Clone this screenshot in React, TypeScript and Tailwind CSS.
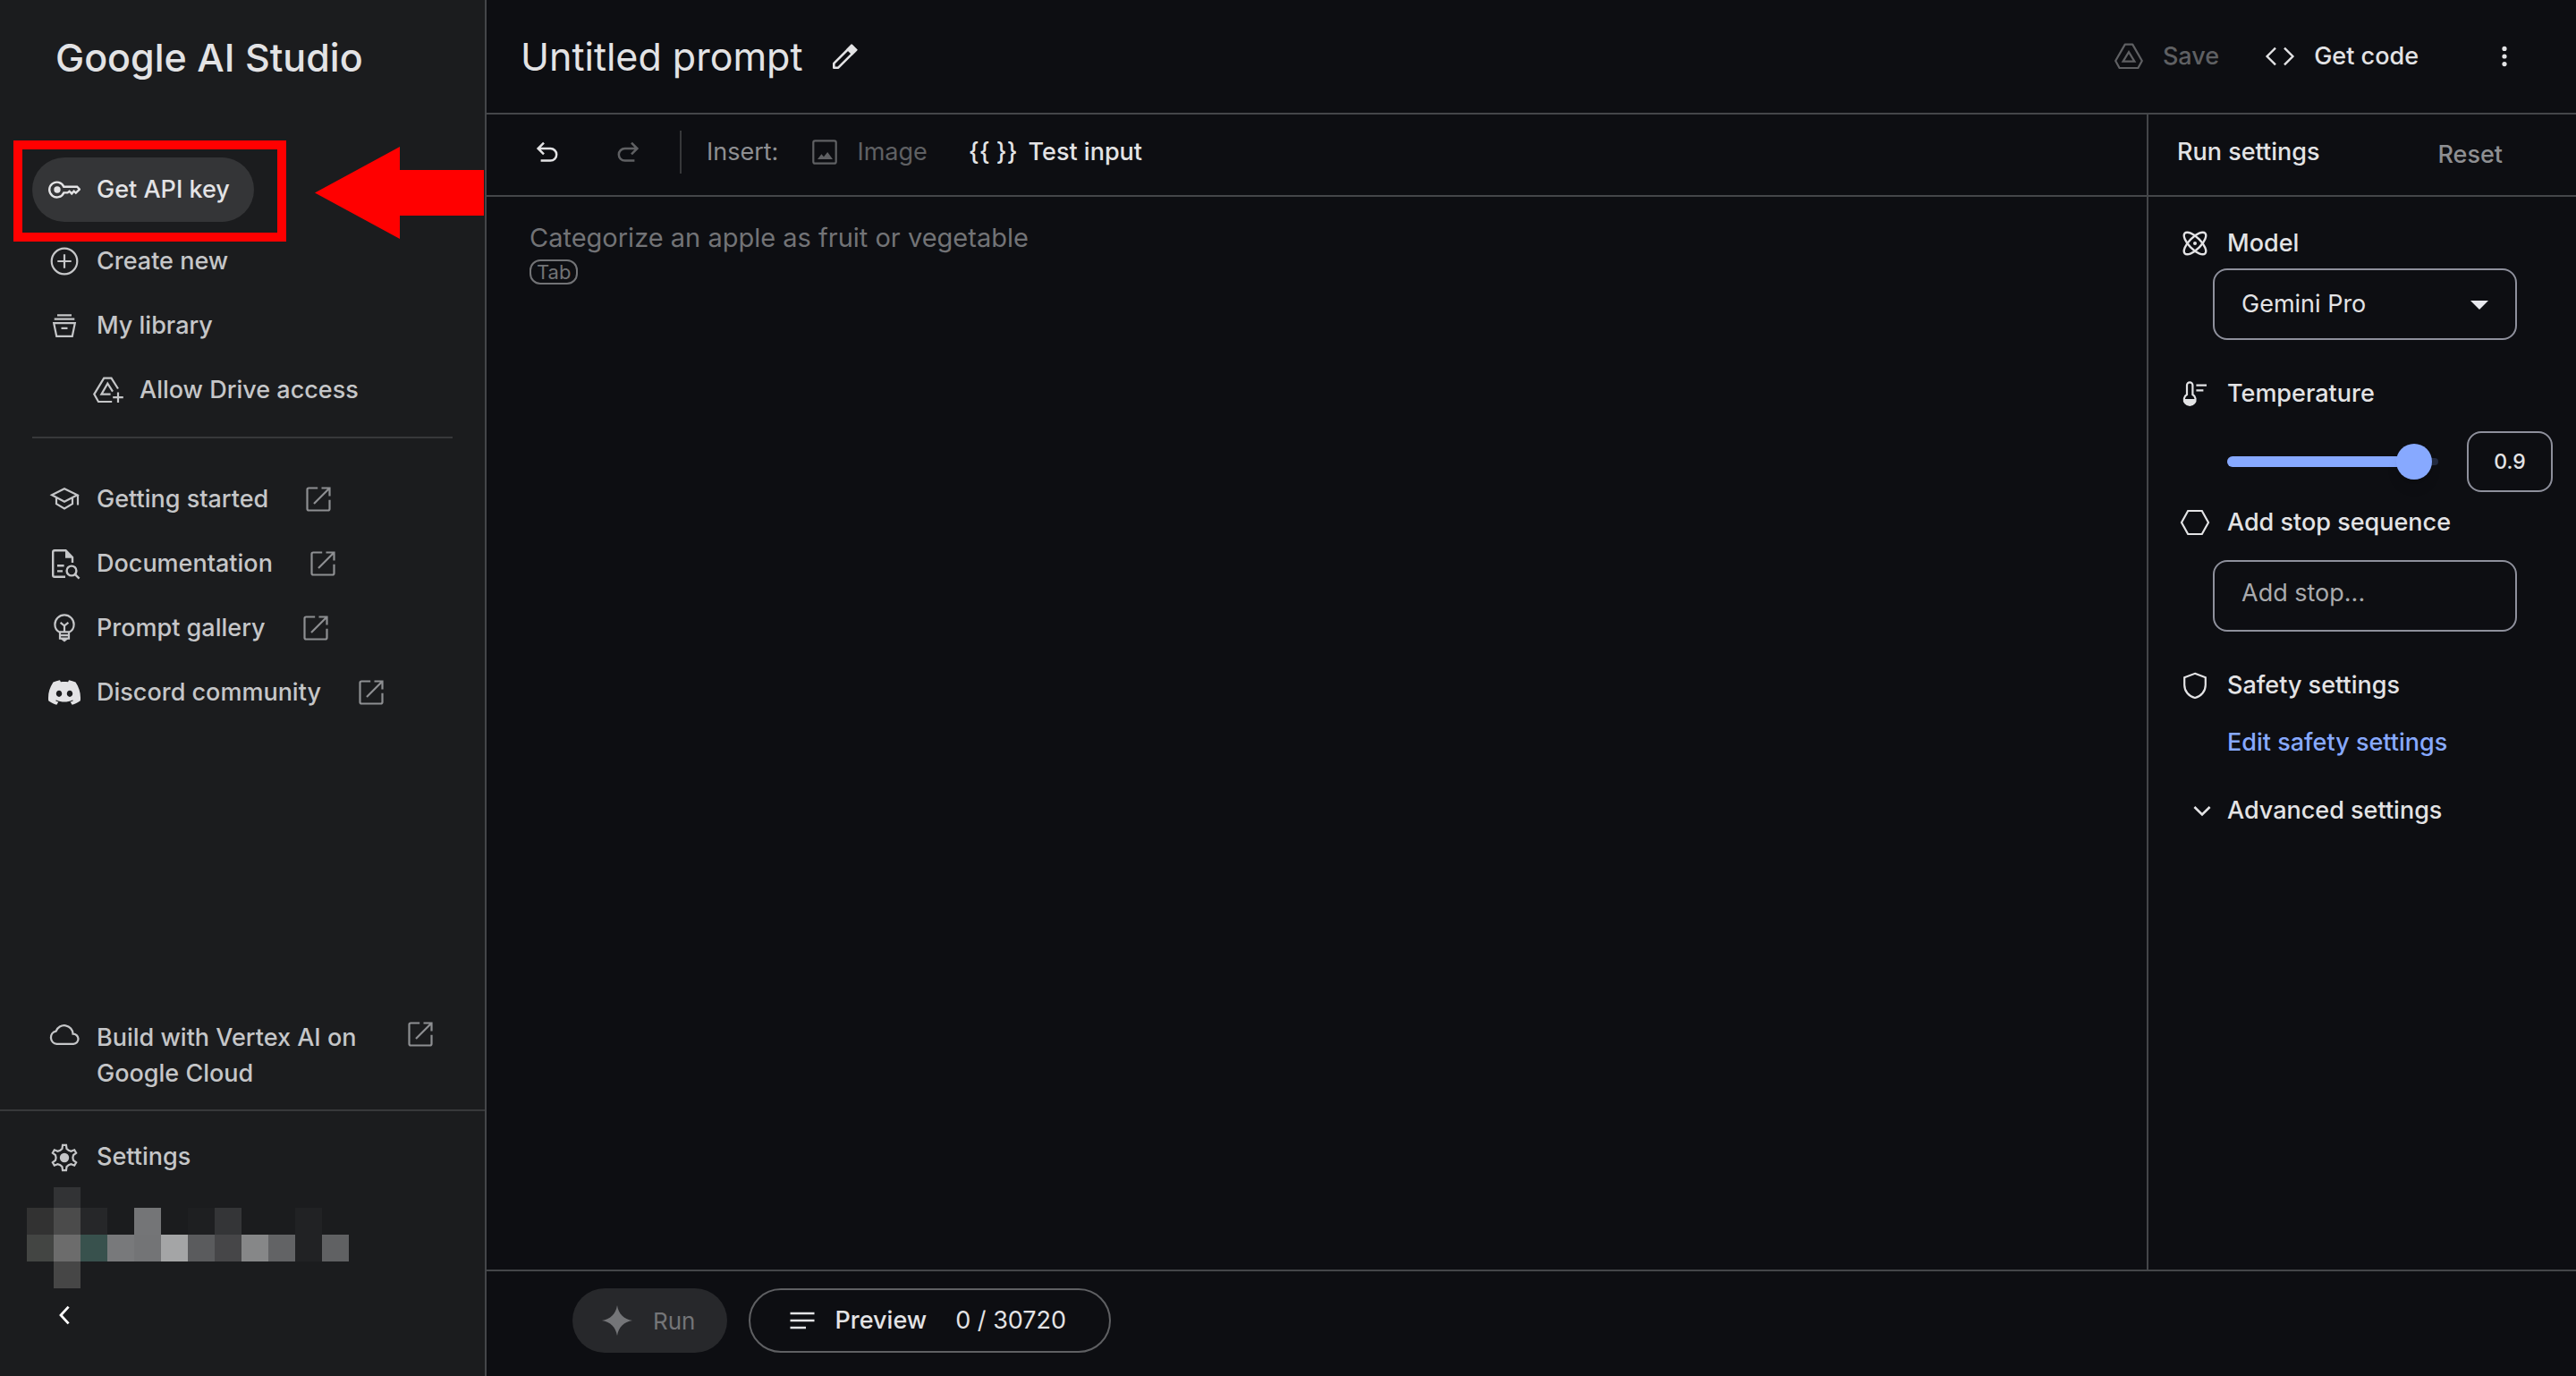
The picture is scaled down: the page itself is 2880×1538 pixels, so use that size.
import React, { useState } from "react";
import { SiDiscord } from "react-icons/si";

type IconProps = { className?: string; children: React.ReactNode; w?: number };

function Icon({ className = "", children, w = 2.2 }: IconProps) {
  return (
    <svg
      viewBox="0 0 36 36"
      aria-hidden="true"
      className={`size-9 shrink-0 ${className}`}
      fill="none"
      stroke="currentColor"
      strokeWidth={w}
    >
      {children}
    </svg>
  );
}

const KeyIcon = () => (
  <Icon w={2.4}>
    <path d="M17.3 14.7H32.2L35 17.6L30.8 21.6L28.6 19.6L26.2 22.4L23.6 19.8L21.6 21.4H17.3A8.4 8.4 0 1 1 17.3 14.7Z" />
    <circle cx="10" cy="18" r="3.7" fill="currentColor" stroke="none" />
  </Icon>
);
const PlusCircleIcon = () => (
  <Icon>
    <circle cx="18" cy="18" r="14.3" />
    <path d="M18 10.3V25.7M10.3 18H25.7" />
  </Icon>
);
const LibraryIcon = () => (
  <Icon>
    <path d="M10 6.3H26M6.7 10.7H29.3M6.2 15.2H29.8L26.8 29.8H9.2ZM14.5 20.8H21.5" />
  </Icon>
);
const DrivePlusIcon = () => (
  <Icon>
    <path d="M30 16.5L22.5 4.6H14.2L3.3 22.6L8 31H23.2" />
    <path d="M24 19.6L18.3 10.6L11.4 22.6H21.6" />
    <path d="M30 20.5V32M24.2 26.2H35.8" />
  </Icon>
);
const DriveIcon = () => (
  <Icon>
    <path d="M13.8 4.6H22.2L32.8 23L28.4 31H7.6L3.2 23Z" strokeLinejoin="round" />
    <path d="M18 13.2L24.4 23.6H11.6Z" />
  </Icon>
);
const GradCapIcon = () => (
  <Icon>
    <path d="M4 13.3L18 6.2L32.4 13.3L18 20.8ZM9 16V23.2L18 28.4L27 23.2V16M33 13V24.5" />
  </Icon>
);
const DocSearchIcon = () => (
  <Icon w={2.4}>
    <path d="M27 17V11L19.5 3.2H7Q5.2 3.2 5.2 5V31Q5.2 32.8 7 32.8H19" />
    <path d="M19 3V11.8H27.6Z" fill="currentColor" stroke="none" />
    <path d="M10 20.2H17.6M10 26.4H16" />
    <circle cx="26" cy="26" r="5.4" />
    <path d="M29.8 29.8L34.6 34.6" />
  </Icon>
);
const BulbIcon = () => (
  <Icon>
    <path d="M13 22.8C9.6 21.2 7.4 17.8 7.4 14A10.6 10.6 0 0 1 28.6 14C28.6 17.8 26.4 21.2 23 22.8" />
    <path d="M13 22V29.6H23V22M13 22.4H23M13 26.2H23M18 22V15.4L13.6 11.8M18 15.4L22.4 11.8" />
    <path d="M13.5 30H22.5L18 33.4Z" fill="currentColor" stroke="none" />
  </Icon>
);
const ExternalIcon = () => (
  <Icon className="text-[#8e8f92]">
    <path d="M17.2 5.5H7.2Q5.5 5.5 5.5 7.2V28.8Q5.5 30.5 7.2 30.5H28.8Q30.5 30.5 30.5 28.8V18.8M21.5 5.5H30.5V14.5M30 6L13 23" />
  </Icon>
);
const CloudIcon = () => (
  <Icon w={2.3}>
    <path d="M28.2 28.8H9.4A7.2 7.2 0 0 1 8.6 14.6A9.8 9.8 0 0 1 27.6 17.6A5.6 5.6 0 0 1 28.2 28.8Z" />
  </Icon>
);
const GearIcon = () => {
  const pt = (r: number, deg: number) => {
    const a = ((deg - 90) * Math.PI) / 180;
    return `${(18 + r * Math.cos(a)).toFixed(2)},${(18 + r * Math.sin(a)).toFixed(2)}`;
  };
  const points = [0, 60, 120, 180, 240, 300]
    .flatMap((d) => [pt(10.4, d - 14), pt(14.2, d - 8), pt(14.2, d + 8), pt(10.4, d + 14), pt(9.4, d + 30)])
    .join(" ");
  return (
    <Icon>
      <polygon points={points} />
      <circle cx="18" cy="18" r="5.2" fill="currentColor" stroke="none" />
    </Icon>
  );
};
const PencilIcon = () => (
  <Icon w={2.6}>
    <path d="M6.3 30.7V25.8L26.2 6L31 10.8L11.2 30.7Z" strokeLinejoin="round" />
    <path d="M22 10.2L26 6L31 10.8L26.8 15Z" fill="currentColor" />
  </Icon>
);
const CodeIcon = () => (
  <Icon w={2.4}>
    <path d="M13 8.6L3.6 18L13 27.4M23 8.6L32.4 18L23 27.4" />
  </Icon>
);
const MoreIcon = () => (
  <Icon>
    <g fill="currentColor" stroke="none">
      <circle cx="18" cy="9.4" r="2.6" />
      <circle cx="18" cy="18" r="2.6" />
      <circle cx="18" cy="26.6" r="2.6" />
    </g>
  </Icon>
);
const UndoIcon = ({ className = "" }: { className?: string }) => (
  <Icon w={2.5} className={className}>
    <path d="M10.6 27.6H21.4A6.8 6.8 0 0 0 21.4 14H8M14 7.6L7.6 14L14 20.4" />
  </Icon>
);
const ImageIcon = () => (
  <Icon>
    <rect x="5.3" y="5.3" width="25.4" height="25.4" rx="2" />
    <path d="M10 26L14.4 20.2L17 23.2L21.2 18L27 26Z" fill="currentColor" stroke="none" />
  </Icon>
);
const ModelIcon = () => (
  <Icon w={2.4}>
    <ellipse cx="18" cy="18" rx="16" ry="6.6" transform="rotate(45 18 18)" />
    <ellipse cx="18" cy="18" rx="16" ry="6.6" transform="rotate(-45 18 18)" />
    <circle cx="18" cy="18" r="2" fill="currentColor" stroke="none" />
  </Icon>
);
const ThermometerIcon = () => (
  <Icon>
    <path d="M9 19V8.6a3.2 3.2 0 0 1 6.4 0V19a6.4 6.4 0 1 1-6.4 0Z" />
    <path d="M5.4 24h13.6a6.8 6.8 0 0 1-13.6 0Z" fill="currentColor" stroke="none" />
    <path d="M19.4 8.6H31M19.4 14.4H27.4" />
  </Icon>
);
const HexagonIcon = () => (
  <Icon>
    <path d="M10.2 5H25.8L33 18L25.8 31H10.2L3 18Z" />
  </Icon>
);
const ShieldIcon = () => (
  <Icon>
    <path d="M18 4.8L29.8 9.2V17.4C29.8 24.6 25 30.4 18 32C11 30.4 6.2 24.6 6.2 17.4V9.2Z" />
  </Icon>
);
const SparkleIcon = () => (
  <Icon>
    <path
      d="M18 1C19.6 10.6 25.4 16.4 35 18C25.4 19.6 19.6 25.4 18 35C16.4 25.4 10.6 19.6 1 18C10.6 16.4 16.4 10.6 18 1Z"
      fill="currentColor"
      stroke="none"
    />
  </Icon>
);
const LinesIcon = () => (
  <Icon w={2.5}>
    <path d="M4.5 10H31.5M4.5 18H31.5M4.5 26H22" />
  </Icon>
);

function NavLink({ icon, label }: { icon: React.ReactNode; label: string }) {
  return (
    <a href="#" className="flex h-[72px] items-center gap-[18px] pl-[18px]">
      {icon}
      <span>{label}</span>
      <span className="ml-5">
        <ExternalIcon />
      </span>
    </a>
  );
}

function NavButton({ icon, label }: { icon: React.ReactNode; label: string }) {
  return (
    <button type="button" className="flex h-[72px] items-center gap-[18px] pl-[18px] text-left">
      {icon}
      {label}
    </button>
  );
}

/* Pixelated account name: one entry per 30px block, "" for an empty block. */
const mosaic: string[][] = [
  ["", "#323335", "", "", "", "", "", "", "", "", "", ""],
  ["#323232", "#4b4b4b", "#262729", "", "#747577", "", "#1e1f21", "#343537", "", "", "#212224", ""],
  ["#434543", "#6c6c6c", "#38514d", "#78797b", "#737476", "#a4a5a6", "#5a5b5d", "#464648", "#868788", "#626365", "#212224", "#606163"],
  ["", "#464646", "", "", "", "", "", "", "", "", "", ""],
];

function Sidebar() {
  return (
    <aside className="flex w-[544px] shrink-0 flex-col border-r-2 border-[#444649] bg-[#1b1c1e] text-[27px] font-medium text-[#c5c6c8]">
      <h1 className="px-[62px] pt-[33px] text-[43px] leading-[62px] text-[#e3e3e5]">Google AI Studio</h1>

      <nav className="mt-[81px] flex flex-col px-9">
        <div className="relative mb-2 flex">
          <button
            type="button"
            className="flex h-[72px] items-center gap-[18px] rounded-full bg-[#343537] pr-[27px] pl-[18px] text-[#e3e3e5]"
          >
            <KeyIcon />
            Get API key
          </button>
          <div className="pointer-events-none absolute -top-[19px] -left-[21px] h-[113px] w-[305px] border-10 border-[#ff0000]" />
          <svg
            viewBox="0 0 189 103"
            aria-hidden="true"
            className="pointer-events-none absolute -top-3 left-[316px] h-[103px] w-[189px]"
          >
            <path d="M0 51.5L95 0V26H189V77H95V103Z" fill="#ff0000" />
          </svg>
        </div>
        <NavButton icon={<PlusCircleIcon />} label="Create new" />
        <NavButton icon={<LibraryIcon />} label="My library" />
        <div className="flex flex-col pl-12">
          <NavButton icon={<DrivePlusIcon />} label="Allow Drive access" />
        </div>
        <hr className="mt-4 mb-8 border-t-2 border-[#37383a]" />
        <NavLink icon={<GradCapIcon />} label="Getting started" />
        <NavLink icon={<DocSearchIcon />} label="Documentation" />
        <NavLink icon={<BulbIcon />} label="Prompt gallery" />
        <NavLink icon={<SiDiscord className="size-9 shrink-0 text-[#e3e3e5]" aria-hidden="true" />} label="Discord community" />
      </nav>

      <div className="mt-auto">
        <a href="#" className="flex items-start gap-[18px] pr-[54px] pb-5 pl-[54px]">
          <CloudIcon />
          <span className="mt-[2px] flex-1 leading-10">
            Build with Vertex AI on
            <br />
            Google Cloud
          </span>
          <ExternalIcon />
        </a>
        <div className="flex h-[298px] flex-col border-t-2 border-[#37383a] pt-[18px]">
          <div className="flex h-[67px] flex-col px-9">
            <NavButton icon={<GearIcon />} label="Settings" />
          </div>
          <div className="ml-[30px] grid w-[360px] grid-cols-12 grid-rows-[23px_30px_30px_30px] self-start">
            {mosaic.flat().map((color, i) => (
              <div key={i} style={color ? { backgroundColor: color } : undefined} />
            ))}
          </div>
          <button type="button" aria-label="Collapse sidebar" className="mt-3 ml-[54px] self-start text-white">
            <Icon w={2.8}>
              <path d="M22.6 8.6L14 18L22.6 27.4" />
            </Icon>
          </button>
        </div>
      </div>
    </aside>
  );
}

function SettingTitle({ icon, children }: { icon: React.ReactNode; children: React.ReactNode }) {
  return (
    <div className="flex h-9 items-center gap-[18px] pl-[34px] font-medium">
      {icon}
      {children}
    </div>
  );
}

function RunSettings() {
  const [temperature, setTemperature] = useState(0.9);
  return (
    <section className="w-[480px] shrink-0 border-l-2 border-[#444649] text-[27px] text-[#e3e3e5]">
      <div className="flex h-[92px] items-center justify-between border-b-2 border-[#444649] pr-[82px] pl-8 font-medium">
        <h2 className="pb-[6px]">Run settings</h2>
        <button type="button" className="text-[#8e8f92]">
          Reset
        </button>
      </div>

      <div className="pt-[34px]">
        <SettingTitle icon={<ModelIcon />}>
          <label htmlFor="model">Model</label>
        </SettingTitle>
        <div className="relative mt-[10px] ml-[72px] w-[340px]">
          <select
            id="model"
            className="h-20 w-full appearance-none rounded-2xl border-2 border-[#8e909c] bg-transparent px-[30px] text-[27px]"
          >
            <option>Gemini Pro</option>
          </select>
          <svg viewBox="0 0 20 10" aria-hidden="true" className="pointer-events-none absolute top-9 right-8 h-[10px] w-5">
            <path d="M0 0H20L10 10Z" fill="#e8e9ee" />
          </svg>
        </div>

        <div className="mt-[42px]">
          <SettingTitle icon={<ThermometerIcon />}>
            <label htmlFor="temperature">Temperature</label>
          </SettingTitle>
        </div>
        <div className="mt-6 flex items-center pl-[88px]">
          <div className="relative flex h-10 w-[236px] items-center">
            <div className="h-2 w-full rounded-full bg-[#232b40]" />
            <div
              className="absolute left-0 h-3 rounded-full bg-[#87a9ff]"
              style={{ width: `${temperature * 98}%` }}
            />
            <input
              id="temperature"
              type="range"
              min="0"
              max="1"
              step="0.05"
              value={temperature}
              onChange={(e) => setTemperature(Number(e.target.value))}
              className="absolute -left-5 h-10 w-[272px] appearance-none bg-transparent [&::-webkit-slider-thumb]:size-10 [&::-webkit-slider-thumb]:appearance-none [&::-webkit-slider-thumb]:rounded-full [&::-webkit-slider-thumb]:bg-[#87a9ff] [&::-webkit-slider-thumb]:shadow-lg"
            />
          </div>
          <input
            type="text"
            aria-label="Temperature value"
            value={temperature}
            onChange={(e) => setTemperature(Number(e.target.value) || 0)}
            className="ml-8 h-[68px] w-24 rounded-2xl border-2 border-[#8e909c] bg-transparent text-center text-[23px] font-medium"
          />
        </div>

        <div className="mt-4">
          <SettingTitle icon={<HexagonIcon />}>
            <label htmlFor="stop">Add stop sequence</label>
          </SettingTitle>
        </div>
        <input
          id="stop"
          type="text"
          placeholder="Add stop..."
          className="mt-6 ml-[72px] block h-20 w-[340px] rounded-2xl border-2 border-[#8e909c] bg-transparent px-[30px] pb-2 placeholder:text-[#a9aaad]"
        />

        <div className="mt-[42px]">
          <SettingTitle icon={<ShieldIcon />}>Safety settings</SettingTitle>
        </div>
        <button type="button" className="mt-7 ml-[88px] block h-9 leading-9 font-medium text-[#87a9ff]">
          Edit safety settings
        </button>
        <button type="button" className="mt-10 ml-[42px] flex h-9 items-center gap-[10px] font-medium">
          <Icon w={2.6}>
            <path d="M9.4 14L18 22.4L26.6 14" />
          </Icon>
          Advanced settings
        </button>
      </div>
    </section>
  );
}

export default function App() {
  return (
    <div className="flex min-h-screen bg-[#0d0e12] font-['Inter','Liberation_Sans',sans-serif]">
      <Sidebar />
      <main className="flex min-w-0 flex-1 flex-col text-[27px] text-[#e3e3e5]">
        <header className="flex h-32 items-center border-b-2 border-[#444649] pr-[62px] pl-[38px]">
          <h2 className="text-[43px] leading-none">Untitled prompt</h2>
          <button type="button" aria-label="Rename prompt" className="ml-7">
            <PencilIcon />
          </button>
          <button
            type="button"
            disabled
            className="ml-auto flex items-center gap-5 font-medium text-[#5f6063]"
          >
            <DriveIcon />
            Save
          </button>
          <button type="button" className="ml-[50px] flex items-center gap-5 font-medium">
            <CodeIcon />
            Get code
          </button>
          <button type="button" aria-label="More options" className="ml-[78px]">
            <MoreIcon />
          </button>
        </header>

        <div className="flex flex-1">
          <section className="flex min-w-0 flex-1 flex-col">
            <div className="flex h-[92px] items-center border-b-2 border-[#444649] pb-[6px] pl-[50px]">
              <button type="button" aria-label="Undo">
                <UndoIcon />
              </button>
              <button type="button" aria-label="Redo" disabled className="ml-[54px] text-[#5f6063]">
                <UndoIcon className="-scale-x-100" />
              </button>
              <div className="ml-10 h-12 w-[2px] bg-[#37383a]" />
              <span className="ml-7 text-[#8e8f92]">Insert:</span>
              <button type="button" disabled className="ml-[34px] flex items-center gap-[18px] text-[#5f6063]">
                <ImageIcon />
                Image
              </button>
              <button type="button" className="ml-[46px] flex items-center gap-3 font-medium">
                <span>{"{{ }}"}</span>
                Test input
              </button>
            </div>
            <div className="flex flex-1 flex-col items-start pt-[26px] pl-12">
              <textarea
                aria-label="Prompt"
                rows={1}
                placeholder="Categorize an apple as fruit or vegetable"
                className="w-full resize-none overflow-hidden bg-transparent text-[29px] leading-10 placeholder:text-[#727376]"
              />
              <kbd className="mt-1 rounded-xl border-2 border-[#727376] px-[6px] font-['Inter',sans-serif] text-[22px] leading-6 text-[#727376]">
                Tab
              </kbd>
            </div>
          </section>
          <RunSettings />
        </div>

        <footer className="flex h-[119px] items-start gap-6 border-t-2 border-[#444649] pt-[19px] pl-24">
          <button
            type="button"
            disabled
            className="flex h-[72px] items-center gap-[22px] rounded-full bg-[#27282b] pr-9 pl-8 text-[26px] text-[#747578]"
          >
            <SparkleIcon />
            Run
          </button>
          <button
            type="button"
            className="flex h-[72px] items-center rounded-full border-2 border-[#5f6063] pr-12 pl-10"
          >
            <LinesIcon />
            <span className="ml-[18px] font-medium">Preview</span>
            <span className="ml-8">0 / 30720</span>
          </button>
        </footer>
      </main>
    </div>
  );
}
